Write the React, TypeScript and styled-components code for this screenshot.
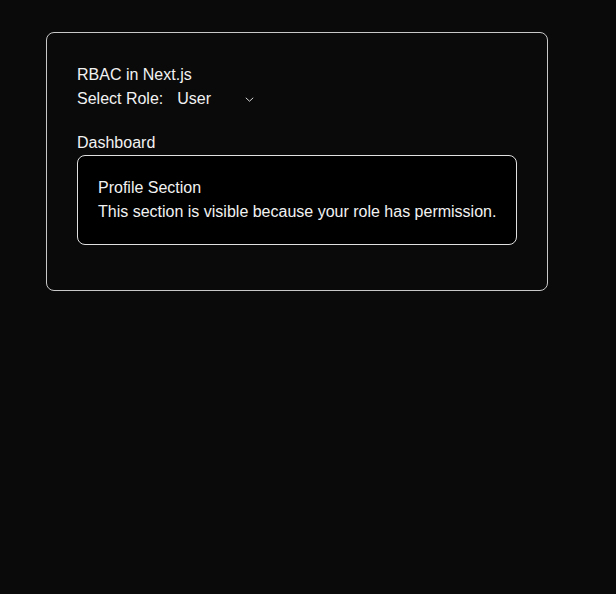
import React, {useState} from "react";
import styled, {createGlobalStyle} from "styled-components";

const GlobalStyle = createGlobalStyle`
  html, body {
    margin: 0;
    background: #0a0a0a;
    color: #f2f2f2;
    font-family: "Liberation Sans", Arial, sans-serif;
  }
`;

const Page = styled.div`
  min-height: 594px;
  padding: 32px 0 0 46px;
  box-sizing: border-box;
`;

const Card = styled.div`
  width: 502px;
  box-sizing: border-box;
  border: 1px solid #c8c8c8;
  border-radius: 8px;
  padding: 30px 30px 45px;
`;

const Line = styled.div`
  font-size: 16px;
  line-height: 24px;
  white-space: nowrap;
`;

const RoleRow = styled.div`
  display: flex;
  align-items: center;
  font-size: 16px;
  line-height: 24px;
`;

const RoleSelect = styled.div`
  position: relative;
  display: flex;
  align-items: center;
  margin-left: 14px;
  width: 77px;
  cursor: pointer;
  > select {
    appearance: none;
    background: transparent;
    border: none;
    color: #f2f2f2;
    font: inherit;
    padding: 0;
    width: 100%;
    outline: none;
    cursor: pointer;
  }
  > svg {
    position: absolute;
    right: 0;
    top: 10px;
    pointer-events: none;
  }
`;

const Heading = styled(Line)`
  margin-top: 20px;
`;

const Section = styled.div`
  background: #000;
  border: 1px solid #e0e0e0;
  border-radius: 8px;
  padding: 20px;
`;

function App() {
  const [role, setRole] = useState("user");
  return (
    <>
      <GlobalStyle/>
      <Page>
        <Card>
          <Line>RBAC in Next.js</Line>
          <RoleRow>
            Select Role:
            <RoleSelect>
              <select value={role} onChange={e => setRole(e.target.value)}>
                <option value="user">User</option>
                <option value="admin">Admin</option>
              </select>
              <svg width="9" height="5" viewBox="0 0 9 5">
                <path d="M0.8 0.8 L4.5 4.2 L8.2 0.8" fill="none" stroke="#d8d8d8" strokeWidth="1"/>
              </svg>
            </RoleSelect>
          </RoleRow>
          <Heading>Dashboard</Heading>
          <Section>
            <Line>Profile Section</Line>
            <Line>This section is visible because your role has permission.</Line>
          </Section>
        </Card>
      </Page>
    </>
  );
}

export default App;
